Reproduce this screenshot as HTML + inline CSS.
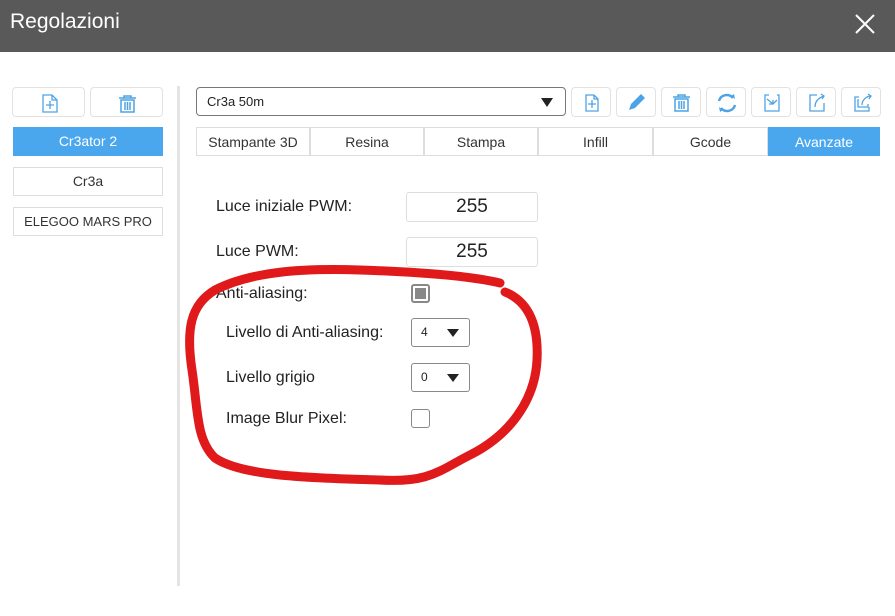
<!DOCTYPE html>
<html><head><style>
*{box-sizing:border-box;margin:0;padding:0}
body{width:895px;height:616px;background:#fff;font-family:"Liberation Sans",sans-serif;position:relative;overflow:hidden;color:#222}
.abs{position:absolute}
.title{left:0;top:0;width:895px;height:52px;background:#595959;color:#fff;font-size:21px;padding:10px 0 0 10px}
.btn{position:absolute;border:1px solid #e2e2e2;border-radius:4px;background:#fff}
.item{position:absolute;left:13px;width:150px;height:29px;border:1px solid #ddd;font-size:14px;text-align:center;line-height:27px;color:#333}
.tab{position:absolute;top:127px;height:29px;border:1px solid #ddd;font-size:14px;text-align:center;line-height:28px;color:#333;background:#fff}
.lbl{position:absolute;font-size:16px;color:#222}
.inp{position:absolute;left:406px;width:132px;height:30px;border:1px solid #ddd;border-radius:3px;text-align:center;font-size:19px;line-height:28px}
.sel{position:absolute;left:411px;width:59px;height:29px;border:1px solid #888;border-radius:3px;font-size:12px;padding-left:9px;line-height:27px}
.sel:after{content:"";position:absolute;right:10px;top:10px;border-left:6px solid transparent;border-right:6px solid transparent;border-top:8px solid #222}
svg.i{position:absolute;left:0;top:0}
</style></head><body>
<div class="abs title">Regolazioni</div>
<svg class="abs" style="left:853px;top:12px" width="24" height="24"><path d="M3 3L21 21M21 3L3 21" stroke="#fff" stroke-width="2"/></svg>

<div class="btn" style="left:12px;top:87px;width:73px;height:30px"><svg width="73" height="30"><path d="M30 7h9l5 5v12h-14z M39 7v5h5 M37 13v8 M33 17h8" fill="none" stroke="#4da3e6" stroke-width="1.3"/></svg></div>
<div class="btn" style="left:90px;top:87px;width:73px;height:30px"><svg width="73" height="30"><path d="M28 10h17 M33 10v-2h7v2 M30 12h13v12h-13z M34 14v8 M36.5 14v8 M39 14v8" fill="none" stroke="#4da3e6" stroke-width="1.5"/></svg></div>
<div class="item" style="top:127px;background:#4aa7ee;color:#fff;border-color:#4aa7ee">Cr3ator 2</div>
<div class="item" style="top:167px">Cr3a</div>
<div class="item" style="top:207px;font-size:13px">ELEGOO MARS PRO</div>
<div class="abs" style="left:177px;top:86px;width:3px;height:500px;background:#e4e4e4"></div>

<div class="abs" style="left:196px;top:87px;width:370px;height:29px;border:1px solid #777;border-radius:4px;font-size:13px;padding:6px 0 0 10px">Cr3a 50m<div class="abs" style="right:12px;top:10px;border-left:6px solid transparent;border-right:6px solid transparent;border-top:9px solid #222"></div></div>
<div class="btn" style="left:571px;top:87px;width:40px;height:30px"><svg width="40" height="30"><path d="M14 7h8l4 4v12h-12z M22 7v4h4 M20 12v8 M16 16h8" fill="none" stroke="#4da3e6" stroke-width="1.3"/></svg></div>
<div class="btn" style="left:616px;top:87px;width:40px;height:30px"><svg width="40" height="30"><path d="M12 22l2-6 10-10 4 4-10 10z" fill="#4da3e6"/></svg></div>
<div class="btn" style="left:661px;top:87px;width:40px;height:30px"><svg width="40" height="30"><path d="M11 9h17 M16 9v-2h7v2 M13 11h13v12h-13z M17 13v8 M19.5 13v8 M22 13v8" fill="none" stroke="#4da3e6" stroke-width="1.5"/></svg></div>
<div class="btn" style="left:706px;top:87px;width:40px;height:30px"><svg width="40" height="30"><path d="M12 13a8 8 0 0 1 14-3 M28 17a8 8 0 0 1-14 3" fill="none" stroke="#4da3e6" stroke-width="2.5"/><path d="M24 8l4 3-1-5zM16 22l-4-3 1 5z" fill="#4da3e6"/></svg></div>
<div class="btn" style="left:751px;top:87px;width:40px;height:30px"><svg width="40" height="30"><path d="M17 7h-4v16h14v-16h-2 M15 11l6 5 4-4 M21 16v-4 M21 16h-4" fill="none" stroke="#4da3e6" stroke-width="1.3"/></svg></div>
<div class="btn" style="left:796px;top:87px;width:40px;height:30px"><svg width="40" height="30"><path d="M20 7h-7v16h14v-8 M18 19c0-5 3-9 9-11 M24 6l3 2-2 3" fill="none" stroke="#4da3e6" stroke-width="1.3"/></svg></div>
<div class="btn" style="left:841px;top:87px;width:40px;height:30px"><svg width="40" height="30"><path d="M17 9h-4v14h14v-4 M16 11v8h10v-3 M20 17c0-4 3-8 8-9 M26 6l3 2-2 3" fill="none" stroke="#4da3e6" stroke-width="1.3"/></svg></div>

<div class="tab" style="left:196px;width:114px">Stampante 3D</div>
<div class="tab" style="left:310px;width:114px">Resina</div>
<div class="tab" style="left:424px;width:114px">Stampa</div>
<div class="tab" style="left:538px;width:115px">Infill</div>
<div class="tab" style="left:653px;width:115px">Gcode</div>
<div class="tab" style="left:768px;width:112px;background:#4aa7ee;color:#fff;border-color:#4aa7ee">Avanzate</div>

<div class="lbl" style="left:216px;top:198px">Luce iniziale PWM:</div>
<div class="inp" style="top:192px">255</div>
<div class="lbl" style="left:216px;top:243px">Luce PWM:</div>
<div class="inp" style="top:237px">255</div>
<div class="lbl" style="left:216px;top:285px">Anti-aliasing:</div>
<div class="abs" style="left:411px;top:284px;width:19px;height:19px;border:2px solid #888;border-radius:3px"><div style="margin:2px;width:11px;height:11px;background:#888"></div></div>
<div class="lbl" style="left:226px;top:324px">Livello di Anti-aliasing:</div>
<div class="sel" style="top:318px">4</div>
<div class="lbl" style="left:226px;top:369px">Livello grigio</div>
<div class="sel" style="top:363px">0</div>
<div class="lbl" style="left:226px;top:410px">Image Blur Pixel:</div>
<div class="abs" style="left:411px;top:409px;width:19px;height:19px;border:1.5px solid #888;border-radius:3px"></div>

<svg class="abs" style="left:0;top:0" width="895" height="616"><path d="M500 283 C470 276 420 272 360 270 C300 268 250 272 215 290 C190 305 186 330 192 370 C198 410 196 440 215 458 C240 475 300 478 380 480 C430 483 440 470 470 455 C510 435 535 400 537 360 C539 320 525 300 505 292" fill="none" stroke="#e0191b" stroke-width="9" stroke-linecap="round"/></svg>
</body></html>
